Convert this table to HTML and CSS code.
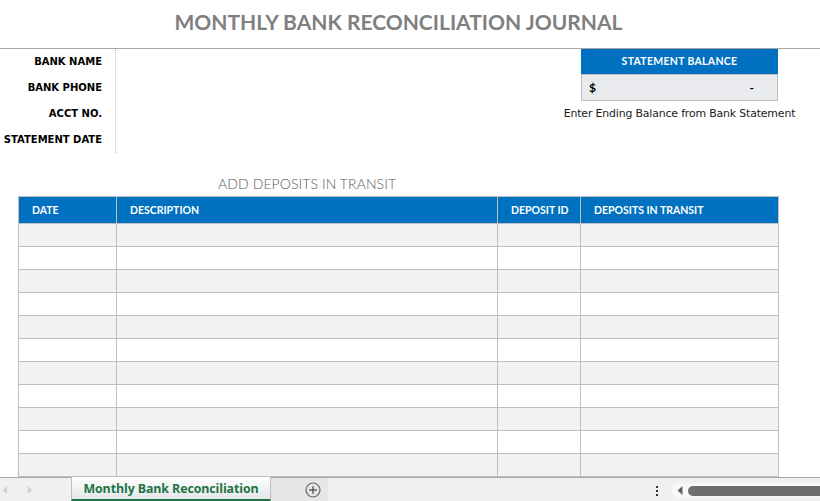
FILE: index.html
```html
<!DOCTYPE html>
<html>
<head>
<meta charset="utf-8">
<link rel="stylesheet" href="styles.css">
</head>
<body>
<div class="sheet">
  <div class="title">MONTHLY BANK RECONCILIATION JOURNAL</div>
  <div class="info">
    <div class="labels">
      <div class="label">BANK NAME</div>
      <div class="label">BANK PHONE</div>
      <div class="label">ACCT NO.</div>
      <div class="label">STATEMENT DATE</div>
    </div>
    <div class="balance">
      <div class="bal-box">
        <div class="bal-head">STATEMENT BALANCE</div>
        <div class="bal-val"><span>$</span><span>-</span></div>
      </div>
      <div class="bal-note">Enter Ending Balance from Bank Statement</div>
    </div>
  </div>
  <div class="section-title">ADD DEPOSITS IN TRANSIT</div>
  <table class="grid">
    <colgroup>
      <col class="c1"><col class="c2"><col class="c3"><col class="c4">
    </colgroup>
    <thead>
      <tr><th>DATE</th><th>DESCRIPTION</th><th>DEPOSIT ID</th><th>DEPOSITS IN TRANSIT</th></tr>
    </thead>
    <tbody>
      <tr><td></td><td></td><td></td><td></td></tr>
      <tr><td></td><td></td><td></td><td></td></tr>
      <tr><td></td><td></td><td></td><td></td></tr>
      <tr><td></td><td></td><td></td><td></td></tr>
      <tr><td></td><td></td><td></td><td></td></tr>
      <tr><td></td><td></td><td></td><td></td></tr>
      <tr><td></td><td></td><td></td><td></td></tr>
      <tr><td></td><td></td><td></td><td></td></tr>
      <tr><td></td><td></td><td></td><td></td></tr>
      <tr><td></td><td></td><td></td><td></td></tr>
      <tr><td></td><td></td><td></td><td></td></tr>
      <tr><td></td><td></td><td></td><td></td></tr>
    </tbody>
  </table>
</div>
<div class="tabbar">
  <div class="nav">
    <svg width="6" height="8" viewBox="0 0 6 8"><path d="M5 0 L1 4 L5 8 Z" fill="#d0d0d0"/></svg>
    <svg width="6" height="8" viewBox="0 0 6 8"><path d="M1 0 L5 4 L1 8 Z" fill="#d0d0d0"/></svg>
  </div>
  <div class="tab">Monthly Bank Reconciliation</div>
  <div class="add">
    <svg width="16" height="16" viewBox="0 0 16 16"><circle cx="8" cy="8" r="7" fill="none" stroke="#6a6a6a" stroke-width="1.2"/><path d="M8 4.2 V11.8 M4.2 8 H11.8" stroke="#5a5a5a" stroke-width="1.4"/></svg>
  </div>
  <div class="spacer"></div>
  <div class="dots"><i></i><i></i><i></i></div>
  <div class="scroll">
    <svg width="6" height="9" viewBox="0 0 6 9"><path d="M5.5 0 L0.5 4.5 L5.5 9 Z" fill="#606060"/></svg>
    <div class="thumb"></div>
  </div>
</div>
</body>
</html>
```

FILE: styles.css
```css
html, body {
  margin: 0;
  padding: 0;
  background: #ffffff;
}
body {
  width: 820px;
  height: 501px;
  overflow: hidden;
  font-family: "DejaVu Sans", "Liberation Sans", sans-serif;
}
.sheet {
  height: 477px;
  overflow: hidden;
}
.title {
  height: 48px;
  border-bottom: 1px solid #a6a6a6;
  text-align: center;
  font-family: "Lato", sans-serif;
  font-weight: bold;
  font-size: 21px;
  color: #7f7f7f;
  line-height: 44px;
  letter-spacing: 0;
  padding-right: 23px;
}
.info {
  display: flex;
  height: 126px;
}
.labels {
  width: 116px;
  height: 104px;
  border-right: 1px dotted #c0c0c0;
  box-sizing: border-box;
}
.label {
  height: 26px;
  line-height: 25px;
  text-align: right;
  padding-right: 13px;
  font-weight: bold;
  font-size: 10px;
  color: #000;
}
.balance {
  margin-left: auto;
  margin-right: 42px;
  width: 197px;
  display: flex;
  flex-direction: column;
  align-items: center;
}
.bal-box {
  width: 197px;
  border: 1px solid #bfbfbf;
  border-top: 0;
  box-sizing: border-box;
}
.bal-head {
  height: 25px;
  line-height: 24px;
  background: #0070c0;
  color: #fff;
  text-align: center;
  font-family: "Lato", sans-serif;
  font-weight: bold;
  font-size: 10.5px;
  letter-spacing: 0.3px;
  margin: 0 -1px;
}
.bal-val {
  height: 25px;
  background: #e9ebef;
  border-top: 1px solid #bfbfbf;
  display: flex;
  justify-content: space-between;
  align-items: center;
  padding: 0 23px 0 7px;
  font-family: "Lato", sans-serif;
  font-weight: bold;
  font-size: 12px;
  color: #000;
}
.bal-note {
  margin-top: 6px;
  white-space: nowrap;
  font-family: "DejaVu Sans", sans-serif;
  font-size: 10.9px;
  color: #1a1a1a;
  letter-spacing: -0.15px;
}
.section-title {
  height: 21px;
  line-height: 17px;
  padding-left: 218px;
  font-family: "Lato", sans-serif;
  font-weight: 300;
  font-size: 14px;
  color: #595959;
  letter-spacing: 0.1px;
}
.grid {
  margin-left: 18px;
  width: 760px;
  border-collapse: collapse;
  table-layout: fixed;
}
.c1 { width: 98px; }
.c2 { width: 381px; }
.c3 { width: 83px; }
.c4 { width: 198px; }
.grid th {
  height: 26px;
  background: #0070c0;
  color: #fff;
  text-align: left;
  padding: 0 0 0 13px;
  font-family: "Lato", sans-serif;
  font-weight: bold;
  font-size: 10.5px;
  border: 1px solid #bfbfbf;
  white-space: nowrap;
}
.grid td {
  height: 22px;
  padding: 0;
  border: 1px solid #bfbfbf;
}
.grid tbody tr:nth-child(odd) td { background: #f2f2f2; }
.grid tbody tr:nth-child(even) td { background: #ffffff; }

.tabbar {
  height: 24px;
  border-top: 1px solid #a8a8a8;
  background: #f0f0f0;
  display: flex;
  align-items: stretch;
  box-sizing: border-box;
}
.nav {
  width: 71px;
  display: flex;
  align-items: center;
  gap: 19px;
  padding-left: 2px;
  box-sizing: border-box;
}
.tab {
  width: 200px;
  box-sizing: border-box;
  background: linear-gradient(#ffffff, #e4e6e8);
  border-left: 1px solid #bdbdbd;
  border-right: 1px solid #bdbdbd;
  border-bottom: 2px solid #217346;
  margin-top: -1px;
  color: #217346;
  font-family: "Open Sans", sans-serif;
  font-weight: bold;
  font-size: 12.4px;
  text-align: center;
  line-height: 23px;
  letter-spacing: -0.1px;
}
.add {
  width: 57px;
  background: #e6e6e6;
  display: flex;
  align-items: center;
  justify-content: flex-end;
  padding-right: 7px;
  box-sizing: border-box;
}
.spacer { flex: 1; }
.dots {
  width: 12px;
  display: flex;
  flex-direction: column;
  align-items: center;
  justify-content: center;
  gap: 2px;
  margin-right: 9px;
  padding-top: 2px;
}
.dots i {
  display: block;
  width: 2px;
  height: 2px;
  background: #333;
}
.scroll {
  width: 148px;
  flex: none;
  margin: 5px 0 3px 0;
  background: #f8f8f8;
  border-radius: 8px 0 0 8px;
  display: flex;
  align-items: center;
  padding-left: 5px;
  gap: 5px;
  box-sizing: border-box;
}
.thumb {
  flex: 1;
  height: 10px;
  background: #6e6e6e;
  border-radius: 5px 0 0 5px;
}
```
